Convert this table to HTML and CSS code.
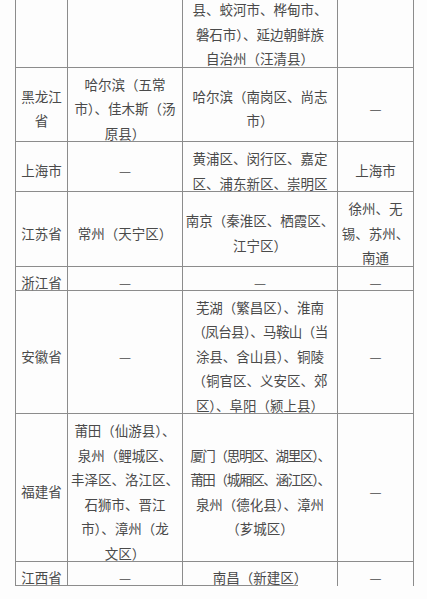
FILE: index.html
```html
<!DOCTYPE html>
<html lang="zh-CN">
<head>
<meta charset="utf-8">
<title>表格</title>
<link rel="stylesheet" href="styles.css">
</head>
<body>
<table class="sheet">
  <colgroup>
    <col class="c1"><col class="c2"><col class="c3"><col class="c4">
  </colgroup>
  <tbody>
    <tr class="r0">
      <td></td>
      <td></td>
      <td><div class="t">县、蛟河市、桦甸市、<br>磐石市）、延边朝鲜族<br>自治州（汪清县）</div></td>
      <td></td>
    </tr>
    <tr>
      <td><div class="t">黑龙江<br>省</div></td>
      <td><div class="t">哈尔滨（五常<br>市）、佳木斯（汤<br>原县）</div></td>
      <td><div class="t">哈尔滨（南岗区、尚志<br>市）</div></td>
      <td><div class="t">—</div></td>
    </tr>
    <tr>
      <td><div class="t">上海市</div></td>
      <td><div class="t">—</div></td>
      <td><div class="t">黄浦区、闵行区、嘉定<br>区、浦东新区、崇明区</div></td>
      <td><div class="t">上海市</div></td>
    </tr>
    <tr>
      <td><div class="t">江苏省</div></td>
      <td><div class="t">常州（天宁区）</div></td>
      <td><div class="t">南京（秦淮区、栖霞区、<br>江宁区）</div></td>
      <td><div class="t">徐州、无<br>锡、苏州、<br>南通</div></td>
    </tr>
    <tr class="one">
      <td><div class="t">浙江省</div></td>
      <td><div class="t">—</div></td>
      <td><div class="t">—</div></td>
      <td><div class="t">—</div></td>
    </tr>
    <tr>
      <td><div class="t">安徽省</div></td>
      <td><div class="t">—</div></td>
      <td><div class="t">芜湖（繁昌区）、淮南<br><span class="cmp">（凤台县）、马鞍山（当</span><br>涂县、含山县）、铜陵<br>（铜官区、义安区、郊<br>区）、阜阳（颍上县）</div></td>
      <td><div class="t">—</div></td>
    </tr>
    <tr>
      <td><div class="t">福建省</div></td>
      <td><div class="t">莆田（仙游县）、<br>泉州（鲤城区、<br>丰泽区、洛江区、<br>石狮市、晋江<br>市）、漳州（龙<br>文区）</div></td>
      <td><div class="t"><span class="cmp2">厦门（思明区、湖里区）、</span><br><span class="cmp2">莆田（城厢区、涵江区）、</span><br>泉州（德化县）、漳州<br>（芗城区）</div></td>
      <td><div class="t">—</div></td>
    </tr>
    <tr class="one last">
      <td><div class="t">江西省</div></td>
      <td><div class="t">—</div></td>
      <td class="cut"><div class="t">南昌（新建区）</div></td>
      <td class="open"><div class="t">—</div></td>
    </tr>
  </tbody>
</table>
</body>
</html>
```

FILE: styles.css
```css
html, body {
  margin: 0;
  padding: 0;
  background: #fdfdfd;
}

body {
  font-family: "Noto Sans CJK SC", "Noto Sans", sans-serif;
  color: #4a4a4a;
  font-size: 13.5px;
  overflow: hidden;
}

.sheet {
  border-collapse: collapse;
  table-layout: fixed;
  width: 399px;
  margin: -28px 0 0 15px;
}

.c1 { width: 52px; }
.c2 { width: 115px; }
.c3 { width: 155px; }
.c4 { width: 76px; }

.sheet td {
  border: 1px solid #8c8c8c;
  padding: 0;
  text-align: center;
  vertical-align: middle;
  line-height: 24.5px;
}

.sheet .r0 td {
  padding-top: 20px;
  vertical-align: bottom;
}

.one td {
  line-height: 23px;
}

.t {
  padding-top: 4px;
  margin-bottom: -4px;
  white-space: nowrap;
}

.cmp {
  letter-spacing: -0.6px;
}

.cmp2 {
  letter-spacing: -1.3px;
}

.last td.cut {
  border-bottom: hidden;
  background: linear-gradient(#8c8c8c, #8c8c8c) left bottom / 115px 1px no-repeat;
}

.last td.open {
  border-bottom: hidden;
}
```
